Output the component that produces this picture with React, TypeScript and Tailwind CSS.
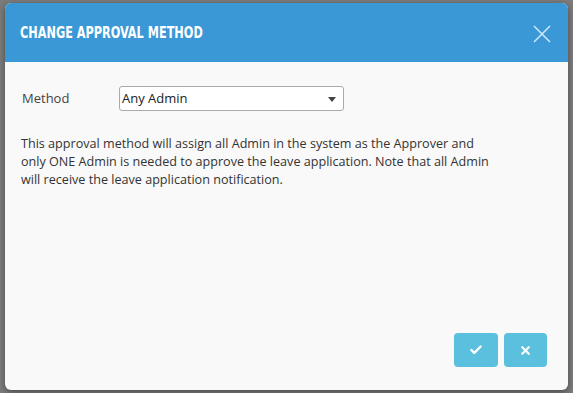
import { Check, X } from 'lucide-react'

export default function App() {
  return (
    <div className="h-[393px] w-[573px] overflow-hidden bg-[#7b7b7b] pl-[5px] pt-[3px] font-['Open_Sans',sans-serif]">
      <div className="flex h-[387px] w-[563px] flex-col overflow-hidden rounded-[6px] bg-[#f9f9f9] shadow-[0_2px_6px_rgba(0,0,0,0.4)]">
        <div className="flex h-[59px] shrink-0 items-center justify-between bg-[#3a98d7] pl-[15px] pr-[16px]">
          <h1 className="origin-left scale-x-[0.76] whitespace-nowrap pt-[2px] font-['DejaVu_Sans_Condensed',sans-serif] text-[16.5px] font-bold text-white">
            CHANGE APPROVAL METHOD
          </h1>
          <button className="pt-[2px] text-[#d4e9f7]">
            <svg width="20" height="20" viewBox="0 0 20 20" fill="none" stroke="currentColor" strokeWidth="1.5">
              <path d="M2 2L18 18M18 2L2 18" />
            </svg>
          </button>
        </div>
        <div className="flex flex-1 flex-col px-[16px] pt-[24px] text-[12.6px] text-[#333]">
          <div className="flex items-center">
            <label className="w-[98px] pl-[1px] text-[13px] text-[#444]">Method</label>
            <div className="relative flex h-[25px] w-[225px] items-center rounded-[3px] border border-[#aaa] bg-white pl-[2px] text-[13px] text-[#222]">
              Any Admin
              <span className="absolute right-[7px] top-[10px] h-0 w-0 border-x-[4px] border-t-[5px] border-x-transparent border-t-[#444]" />
            </div>
          </div>
          <p className="mt-[24px] max-w-[472px] leading-[18px]">
            This approval method will assign all Admin in the system as the Approver and only ONE Admin is needed to approve the leave application. Note that all Admin will receive the leave application notification.
          </p>
          <div className="mt-auto mb-[23px] flex justify-end gap-[6px] pr-[5px]">
            <button className="flex h-[34px] w-[44px] items-center justify-center rounded-[4px] bg-[#5bc0de] text-white">
              <Check size={14} strokeWidth={4} />
            </button>
            <button className="flex h-[34px] w-[43px] items-center justify-center rounded-[4px] bg-[#5bc0de] text-white">
              <X size={13} strokeWidth={4} />
            </button>
          </div>
        </div>
      </div>
    </div>
  )
}
